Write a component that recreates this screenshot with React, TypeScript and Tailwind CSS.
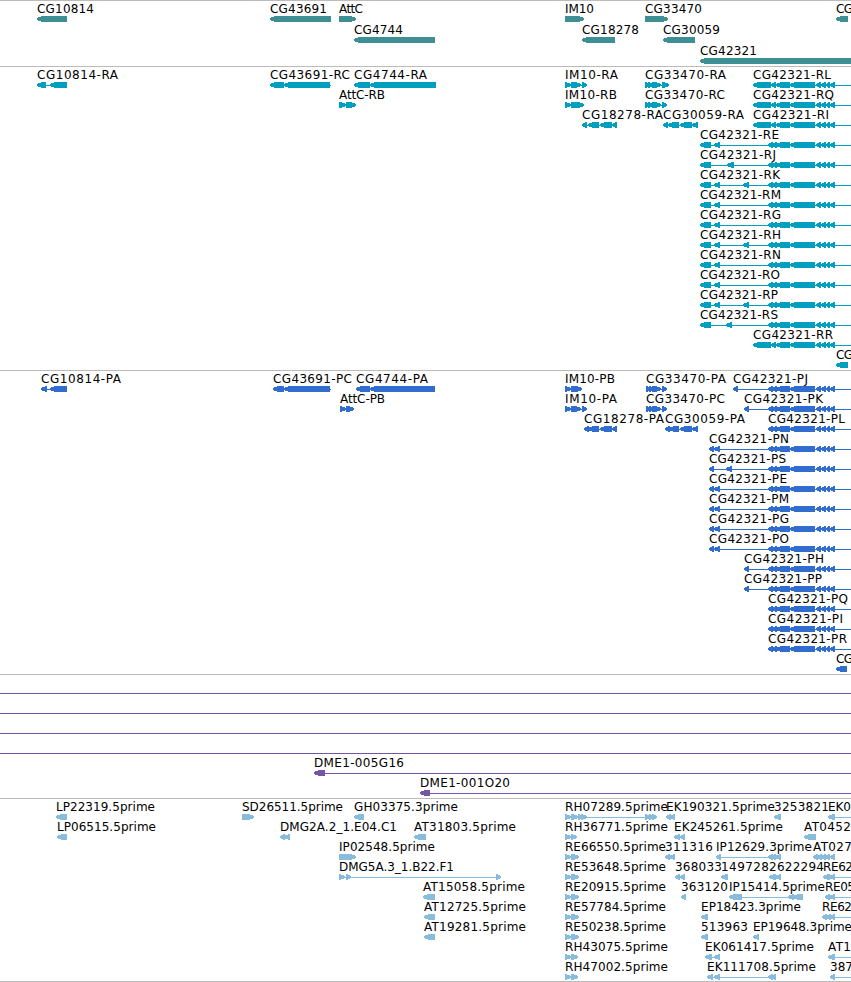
type Exon = [start: number, end: number]

interface Feature {
  row: number
  x: number
  label?: string
  labelWidth?: number
  exons: Exon[]
  forward?: boolean
  lineTo?: number
}

interface TrackProps {
  features: Feature[]
  color: string
  height: number
  pitch?: number
}

const VIEW_WIDTH = 851

function feature(
  row: number,
  x: number,
  label: string,
  labelWidth: number,
  exons: Exon[],
  options: { forward?: boolean; lineTo?: number } = {},
): Feature {
  return { row, x, label, labelWidth, exons, ...options }
}

const FWD = { forward: true }
const OPEN = { lineTo: VIEW_WIDTH }

// exons shared by every CG42321 isoform
const tail: Exon[] = [[790, 815], [816, 821], [821, 826], [826, 830], [830, 835]]
const shared: Exon[] = [[768, 773], [772, 777], [776, 790], ...tail]
const longStart: Exon[] = [[753, 771], [771, 776], [776, 790], ...tail]

const genes: Feature[] = [
  feature(0, 37, 'CG10814', 57, [[37, 67]]),
  feature(0, 270, 'CG43691', 57, [[270, 331]]),
  feature(0, 339, 'AttC', 24, [[339, 356]], FWD),
  feature(1, 354, 'CG4744', 49, [[354, 435]]),
  feature(0, 565, 'IM10', 29, [[565, 584]], FWD),
  feature(1, 582, 'CG18278', 57, [[582, 615]]),
  feature(0, 645, 'CG33470', 57, [[645, 668]], FWD),
  feature(1, 663, 'CG30059', 57, [[663, 695]]),
  feature(2, 700, 'CG42321', 57, [[700, 860]]),
  feature(0, 836, 'CG', 17, [[836, 848]]),
]

const transcripts: Feature[] = [
  feature(0, 37, 'CG10814-RA', 81, [[37, 46], [50, 67]]),
  feature(0, 270, 'CG43691-RC', 80, [[270, 284], [284, 330]], { lineTo: 331 }),
  feature(0, 354, 'CG4744-RA', 73, [[354, 370], [370, 436]]),
  feature(1, 339, 'AttC-RB', 46, [[339, 346], [346, 356]], FWD),
  feature(0, 565, 'IM10-RA', 53, [[565, 571], [571, 581], [582, 587]], FWD),
  feature(1, 565, 'IM10-RB', 52, [[565, 571], [571, 584]], FWD),
  feature(2, 582, 'CG18278-RA', 81, [[582, 587], [588, 599], [600, 612], [612, 617]]),
  feature(0, 645, 'CG33470-RA', 81, [[645, 649], [648, 653], [652, 661], [662, 669]], FWD),
  feature(1, 645, 'CG33470-RC', 80, [[645, 649], [648, 653], [652, 661], [662, 667]], FWD),
  feature(2, 663, 'CG30059-RA', 81, [[663, 668], [668, 679], [680, 692], [692, 698]]),
  feature(0, 753, 'CG42321-RL', 78, longStart, OPEN),
  feature(1, 753, 'CG42321-RQ', 81, longStart, OPEN),
  feature(2, 753, 'CG42321-RI', 76, longStart, OPEN),
  feature(3, 700, 'CG42321-RE', 79, [[700, 711], [714, 720], ...shared], OPEN),
  feature(4, 700, 'CG42321-RJ', 76, [[700, 711], [727, 734], ...shared], OPEN),
  feature(5, 700, 'CG42321-RK', 80, [[700, 711], [714, 720], [743, 749], ...shared], OPEN),
  feature(6, 700, 'CG42321-RM', 81, [[700, 711], [714, 720], ...shared], OPEN),
  feature(7, 700, 'CG42321-RG', 81, [[700, 711], [714, 720], ...shared], OPEN),
  feature(8, 700, 'CG42321-RH', 81, [[700, 711], [714, 720], [743, 749], ...shared], OPEN),
  feature(9, 700, 'CG42321-RN', 81, [[700, 711], [714, 720], ...shared], OPEN),
  feature(10, 700, 'CG42321-RO', 80, [[700, 711], [714, 720], ...shared], OPEN),
  feature(11, 700, 'CG42321-RP', 78, [[700, 711], [714, 720], [743, 749], ...shared], OPEN),
  feature(12, 700, 'CG42321-RS', 78, [[700, 711], [726, 732], ...shared], OPEN),
  feature(13, 753, 'CG42321-RR', 80, longStart, OPEN),
  feature(14, 836, 'CG', 17, [[836, 848]]),
]

const proteins: Feature[] = [
  feature(0, 41, 'CG10814-PA', 80, [[41, 47], [50, 67]]),
  feature(0, 273, 'CG43691-PC', 79, [[273, 284], [284, 330]], { lineTo: 331 }),
  feature(0, 356, 'CG4744-PA', 72, [[356, 370], [370, 435]]),
  feature(1, 340, 'AttC-PB', 45, [[340, 346], [346, 354]], FWD),
  feature(0, 565, 'IM10-PB', 50, [[565, 571], [571, 582]], FWD),
  feature(1, 565, 'IM10-PA', 52, [[565, 571], [571, 581], [582, 587]], FWD),
  feature(2, 584, 'CG18278-PA', 80, [[584, 589], [588, 599], [600, 612], [612, 617]]),
  feature(0, 646, 'CG33470-PA', 80, [[646, 650], [649, 653], [652, 661], [662, 667]], FWD),
  feature(1, 646, 'CG33470-PC', 79, [[646, 650], [649, 653], [652, 661], [662, 667]], FWD),
  feature(2, 665, 'CG30059-PA', 80, [[665, 670], [669, 679], [680, 692], [692, 698]]),
  feature(0, 733, 'CG42321-PJ', 75, [[733, 738], ...shared], OPEN),
  feature(1, 744, 'CG42321-PK', 79, [[744, 749], ...shared], OPEN),
  feature(2, 768, 'CG42321-PL', 77, shared, OPEN),
  feature(3, 709, 'CG42321-PN', 80, [[709, 714], [714, 720], ...shared], OPEN),
  feature(4, 709, 'CG42321-PS', 77, [[709, 714], [726, 732], ...shared], OPEN),
  feature(5, 709, 'CG42321-PE', 78, [[709, 714], [714, 720], ...shared], OPEN),
  feature(6, 709, 'CG42321-PM', 80, [[709, 714], [714, 720], ...shared], OPEN),
  feature(7, 709, 'CG42321-PG', 80, [[709, 714], [714, 720], ...shared], OPEN),
  feature(8, 709, 'CG42321-PO', 80, [[709, 714], [714, 720], ...shared], OPEN),
  feature(9, 744, 'CG42321-PH', 80, [[744, 749], ...shared], OPEN),
  feature(10, 744, 'CG42321-PP', 78, [[744, 749], ...shared], OPEN),
  feature(11, 768, 'CG42321-PQ', 80, shared, OPEN),
  feature(12, 768, 'CG42321-PI', 75, shared, OPEN),
  feature(13, 768, 'CG42321-PR', 79, shared, OPEN),
  feature(14, 836, 'CG', 17, [[836, 847]]),
]

const clones: Feature[] = [
  { row: 0, x: 0, exons: [], lineTo: VIEW_WIDTH },
  { row: 1, x: 0, exons: [], lineTo: VIEW_WIDTH },
  { row: 2, x: 0, exons: [], lineTo: VIEW_WIDTH },
  { row: 3, x: 0, exons: [], lineTo: VIEW_WIDTH },
  feature(4, 314, 'DME1-005G16', 90, [[314, 325]], OPEN),
  feature(5, 420, 'DME1-001O20', 90, [[420, 430]], OPEN),
]

const ests: Feature[] = [
  feature(0, 56, 'LP22319.5prime', 99, [[56, 67]]),
  feature(1, 57, 'LP06515.5prime', 99, [[57, 67]]),
  feature(0, 242, 'SD26511.5prime', 101, [[242, 254]], FWD),
  feature(1, 280, 'DMG2A.2_1.E04.C1', 117, [[280, 285], [284, 290]]),
  feature(0, 354, 'GH03375.3prime', 104, [[354, 364]]),
  feature(1, 414, 'AT31803.5prime', 102, [[414, 426]]),
  feature(2, 339, 'IP02548.5prime', 96, [[339, 356]], FWD),
  feature(3, 339, 'DMG5A.3_1.B22.F1', 115, [[339, 345], [346, 351], [496, 501]], FWD),
  feature(4, 423, 'AT15058.5prime', 102, [[423, 435]]),
  feature(5, 424, 'AT12725.5prime', 102, [[424, 435]]),
  feature(6, 424, 'AT19281.5prime', 102, [[424, 435]]),
  feature(0, 565, 'RH07289.5prime', 103, [[565, 571], [571, 578], [578, 582], [581, 587], [645, 650], [649, 653], [652, 657]], FWD),
  feature(1, 565, 'RH36771.5prime', 103, [[565, 571], [571, 577]], FWD),
  feature(2, 565, 'RE66550.5prime', 101, [[565, 571], [571, 579]], FWD),
  feature(3, 565, 'RE53648.5prime', 101, [[565, 571], [571, 579]], FWD),
  feature(4, 565, 'RE20915.5prime', 101, [[565, 571], [571, 579]], FWD),
  feature(5, 565, 'RE57784.5prime', 101, [[565, 571], [571, 579]], FWD),
  feature(6, 565, 'RE50238.5prime', 101, [[565, 571], [571, 579]], FWD),
  feature(7, 565, 'RH43075.5prime', 103, [[565, 571], [571, 578]], FWD),
  feature(8, 565, 'RH47002.5prime', 103, [[565, 571], [571, 578]], FWD),
  feature(0, 666, 'EK190321.5prime', 109, [[666, 671], [669, 675]]),
  feature(1, 674, 'EK245261.5prime', 109, [[674, 680], [680, 685]]),
  feature(2, 665, '311316', 48, [[665, 670], [669, 675]]),
  feature(3, 675, '368033', 47, [[675, 680], [680, 685]]),
  feature(4, 681, '363120', 47, [[681, 686]]),
  feature(5, 701, 'EP18423.3prime', 100, [[701, 708]]),
  feature(6, 701, '513963', 47, [[701, 708]]),
  feature(7, 705, 'EK061417.5prime', 109, [[705, 712], [714, 720]]),
  feature(8, 707, 'EK111708.5prime', 109, [[707, 713], [714, 720], [768, 773], [771, 776]]),
  feature(0, 774, '3253821', 55, [[774, 781]]),
  feature(0, 828, 'EK0', 23, [[828, 835]], OPEN),
  feature(1, 804, 'AT0452', 47, [[804, 816]]),
  feature(2, 716, 'IP12629.3prime', 96, [[716, 721], [768, 773], [772, 776], [775, 781]]),
  feature(2, 813, 'AT027', 39, [[813, 818], [817, 822], [821, 826], [825, 830], [830, 835]]),
  feature(3, 721, '149728', 48, [[721, 728]]),
  feature(3, 769, '2622294', 55, [[769, 776], [775, 781]]),
  feature(3, 823, 'RE62', 30, [[823, 830], [829, 835]], OPEN),
  feature(4, 729, 'IP15414.5prime', 96, [[729, 742], [788, 794], [793, 803]]),
  feature(4, 825, 'RE05', 30, [[825, 830], [829, 835]], OPEN),
  feature(5, 822, 'RE62', 30, [[822, 827], [826, 831], [830, 835]], OPEN),
  feature(6, 753, 'EP19648.3prime', 99, [[753, 759]]),
  feature(7, 828, 'AT1', 23, [[828, 835]], OPEN),
  feature(8, 830, '387', 23, [[830, 835]], OPEN),
]

// bar with a pointed end on the strand side
function arrowPoints([start, end]: Exon, top: number, forward?: boolean): string {
  const head = Math.min(5, end - start - 1)
  const mid = top + 3
  const bottom = top + 6
  if (forward) {
    const neck = end - head
    return `${start},${top} ${neck},${top} ${end},${mid - 1} ${end},${mid + 1} ${neck},${bottom} ${start},${bottom}`
  }
  const neck = start + head
  return `${end},${top} ${neck},${top} ${start},${mid - 1} ${start},${mid + 1} ${neck},${bottom} ${end},${bottom}`
}

function Track({ features, color, height, pitch = 20 }: TrackProps) {
  return (
    <section className="border-t border-[#bbbbbb]">
      <svg
        className="block"
        width={VIEW_WIDTH}
        height={height}
        viewBox={`0 1 ${VIEW_WIDTH} ${height}`}
        fill={color}
        shapeRendering="crispEdges"
      >
        {features.map((f, i) => {
          const y = f.row * pitch
          const last = f.exons[f.exons.length - 1]
          const lineEnd = f.lineTo ?? last[1]
          return (
            <g key={i}>
              {(f.exons.length > 1 || f.lineTo) && (
                <rect x={f.x} y={y + 19} width={lineEnd - f.x} height={1} />
              )}
              {f.exons.map(exon => (
                <polygon key={exon[0]} points={arrowPoints(exon, y + 16, f.forward)} />
              ))}
              {f.label && (
                <text
                  x={f.x}
                  y={y + 13}
                  textLength={f.labelWidth}
                  className="fill-black text-[12px]"
                >
                  {f.label}
                </text>
              )}
            </g>
          )
        })}
      </svg>
    </section>
  )
}

export default function App() {
  return (
    <main className="flex w-[851px] flex-col overflow-hidden border-b border-[#bbbbbb] bg-white font-['DejaVu_Sans',sans-serif]">
      <Track features={genes} color="#3d8f93" height={65} pitch={21} />
      <Track features={transcripts} color="#009fbf" height={303} />
      <Track features={proteins} color="#316dce" height={303} />
      <Track features={clones} color="#7456a8" height={123} />
      <Track features={ests} color="#88bcdc" height={182} />
    </main>
  )
}
